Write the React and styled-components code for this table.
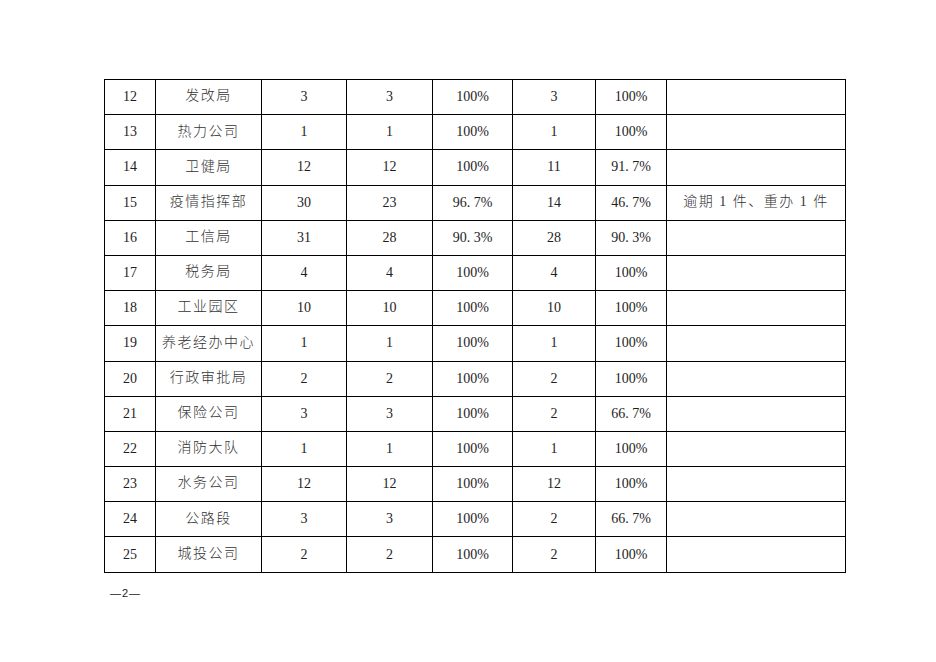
import React from "react";
import styled, { createGlobalStyle } from "styled-components";

const Global = createGlobalStyle`
  html, body {
    margin: 0;
    padding: 0;
    background: #fff;
  }
`;

const Page = styled.div`
  width: 936px;
  height: 662px;
  box-sizing: border-box;
  padding: 79px 0 0 104px;
  font-family: "Liberation Serif", "Noto Sans CJK SC", serif;
  color: #1e1e1e;
`;

const Table = styled.table`
  border-collapse: collapse;
  table-layout: fixed;
  width: 741px;
  border: 1.5px solid #000;
`;

const Row = styled.tr`
  height: 35.2px;
`;

const Cell = styled.td`
  border: 1px solid #000;
  padding: 0 0 ${(p) => (p.$cjk ? "1.5px" : "0")};
  text-align: center;
  vertical-align: middle;
  font-size: 14px;
  line-height: 16px;
  font-weight: ${(p) => (p.$cjk ? 300 : 400)};
  color: ${(p) => (p.$cjk ? "#333" : "#1e1e1e")};
  letter-spacing: ${(p) => (p.$cjk ? "1.5px" : "0")};
  white-space: nowrap;
`;

const Footer = styled.div`
  margin: 14px 0 0 6px;
  font-family: "Liberation Sans", "Noto Sans CJK SC", sans-serif;
  font-size: 11px;
  letter-spacing: 1px;
  color: #222;
`;

const widths = [51, 106, 85, 86, 80, 83, 71, 179];

const rows = [
  ["12", "发改局", "3", "3", "100%", "3", "100%", ""],
  ["13", "热力公司", "1", "1", "100%", "1", "100%", ""],
  ["14", "卫健局", "12", "12", "100%", "11", "91. 7%", ""],
  ["15", "疫情指挥部", "30", "23", "96. 7%", "14", "46. 7%", "逾期 1 件、重办 1 件"],
  ["16", "工信局", "31", "28", "90. 3%", "28", "90. 3%", ""],
  ["17", "税务局", "4", "4", "100%", "4", "100%", ""],
  ["18", "工业园区", "10", "10", "100%", "10", "100%", ""],
  ["19", "养老经办中心", "1", "1", "100%", "1", "100%", ""],
  ["20", "行政审批局", "2", "2", "100%", "2", "100%", ""],
  ["21", "保险公司", "3", "3", "100%", "2", "66. 7%", ""],
  ["22", "消防大队", "1", "1", "100%", "1", "100%", ""],
  ["23", "水务公司", "12", "12", "100%", "12", "100%", ""],
  ["24", "公路段", "3", "3", "100%", "2", "66. 7%", ""],
  ["25", "城投公司", "2", "2", "100%", "2", "100%", ""],
];

export default function App() {
  return (
    <Page>
      <Global />
      <Table>
        <colgroup>
          {widths.map((w, i) => (
            <col key={i} style={{ width: w }} />
          ))}
        </colgroup>
        <tbody>
          {rows.map((r) => (
            <Row key={r[0]}>
              {r.map((c, i) => (
                <Cell key={i} $cjk={i === 1 || i === 7}>
                  {c}
                </Cell>
              ))}
            </Row>
          ))}
        </tbody>
      </Table>
      <Footer>—2—</Footer>
    </Page>
  );
}
